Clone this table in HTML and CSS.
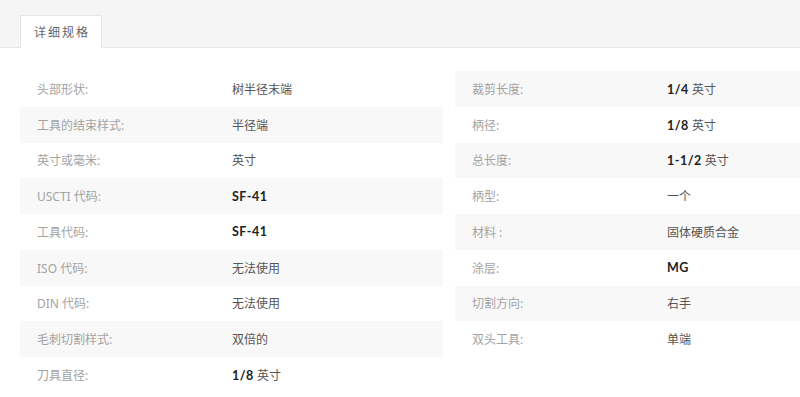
FILE: index.html
```html
<!DOCTYPE html>
<html lang="zh-CN">
<head>
<meta charset="utf-8">
<link rel="stylesheet" href="styles.css">
</head>
<body>
<div class="tabs"><div class="tab">详细规格</div></div>
<div class="specs">
  <div class="col col-left">
    <div class="row"><span class="label">头部形状:</span><span class="value">树半径末端</span></div>
    <div class="row"><span class="label">工具的结束样式:</span><span class="value">半径端</span></div>
    <div class="row"><span class="label">英寸或毫米:</span><span class="value">英寸</span></div>
    <div class="row"><span class="label">USCTI 代码:</span><span class="value"><b>SF-41</b></span></div>
    <div class="row"><span class="label">工具代码:</span><span class="value"><b>SF-41</b></span></div>
    <div class="row"><span class="label">ISO 代码:</span><span class="value">无法使用</span></div>
    <div class="row"><span class="label">DIN 代码:</span><span class="value">无法使用</span></div>
    <div class="row"><span class="label">毛刺切割样式:</span><span class="value">双倍的</span></div>
    <div class="row"><span class="label">刀具直径:</span><span class="value"><b>1/8</b> 英寸</span></div>
  </div>
  <div class="col col-right">
    <div class="row"><span class="label">裁剪长度:</span><span class="value"><b>1/4</b> 英寸</span></div>
    <div class="row"><span class="label">柄径:</span><span class="value"><b>1/8</b> 英寸</span></div>
    <div class="row"><span class="label">总长度:</span><span class="value"><b>1-1/2</b> 英寸</span></div>
    <div class="row"><span class="label">柄型:</span><span class="value">一个</span></div>
    <div class="row"><span class="label">材料 :</span><span class="value">固体硬质合金</span></div>
    <div class="row"><span class="label">涂层:</span><span class="value"><b>MG</b></span></div>
    <div class="row"><span class="label">切割方向:</span><span class="value">右手</span></div>
    <div class="row"><span class="label">双头工具:</span><span class="value">单端</span></div>
  </div>
</div>
</body>
</html>
```
FILE: styles.css
```css
html, body {
  margin: 0;
  padding: 0;
  background: #fff;
  overflow: hidden;
  font-family: "Noto Sans", "Noto Sans CJK SC", sans-serif;
}
.tabs {
  background: #f5f5f5;
  border-bottom: 1px solid #e8e8e8;
  height: 32px;
  padding: 15px 0 0 20px;
  display: flex;
  align-items: flex-end;
}
.tab {
  width: 78px;
  height: 32px;
  margin-bottom: -1px;
  background: #fff;
  border: 1px solid #e6e6e6;
  border-bottom: none;
  box-sizing: content-box;
  display: flex;
  align-items: center;
  justify-content: center;
  font-size: 12px;
  letter-spacing: 2px;
  color: #666;
  padding-left: 2px;
}
.specs {
  display: grid;
  grid-template-columns: 423px 1fr;
  column-gap: 12px;
  padding: 23px 0 0 20px;
}
.row {
  display: flex;
  align-items: center;
  height: 35.75px;
  font-size: 12px;
}
.col-left .row:nth-child(even),
.col-right .row:nth-child(odd) {
  background: #f8f8f8;
}
.label {
  width: 195px;
  padding-left: 17px;
  color: #a3a3a3;
  flex: none;
}
.value {
  color: #555;
}
.value b {
  font-family: "Lato", "Noto Sans", sans-serif;
  font-weight: 700;
  font-size: 12.5px;
  color: #222;
  letter-spacing: 0.5px;
}
```
